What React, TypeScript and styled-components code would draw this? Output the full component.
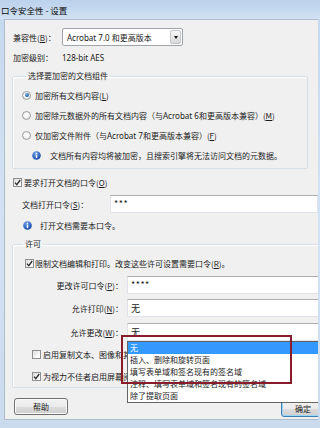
import React from 'react';
import styled, { createGlobalStyle } from 'styled-components';

const GlobalStyle = createGlobalStyle`
  html, body {
    margin: 0;
    padding: 0;
    background: #f0f0f0;
  }
  body {
    font-family: "Noto Sans", "Noto Sans CJK SC", sans-serif;
  }
`;

const Window = styled.div`
  width: 320px;
  height: 428px;
  overflow: hidden;
  display: flex;
  flex-direction: column;
  background: linear-gradient(180deg, #c4d8ef 0%, #d3e2f3 50%, #cbdbee 100%);
  font-size: 8px;
  color: #1b1b1b;
`;

const TitleBar = styled.div`
  height: 19px;
  flex: none;
  display: flex;
  align-items: center;
  padding-left: 1px;
  font-family: "Noto Sans CJK SC", sans-serif;
  font-size: 8.5px;
  color: #0d0d0d;
  background: linear-gradient(180deg, #bcd2ec 0%, #c6daf0 60%, #d2e2f4 100%);
`;

const Frame = styled.div`
  flex: 1;
  min-height: 0;
  display: flex;
  flex-direction: column;
  padding: 0 2px 8px 4px;
`;

const Body = styled.div`
  flex: 1;
  position: relative;
  overflow: hidden;
  background: #f0f0f0;
  border: 1px solid #aebccc;
  border-right: none;
  padding: 8px 0 0 8px;
  display: flex;
  flex-direction: column;
`;

const Row = styled.div<{ $top?: number; $indent?: number; $h?: number }>`
  display: flex;
  align-items: center;
  height: ${p => p.$h ?? 16}px;
  margin-top: ${p => p.$top ?? 0}px;
  padding-left: ${p => p.$indent ?? 0}px;
  white-space: nowrap;
  flex: none;
`;

const Label = styled.span<{ $w?: number; $right?: boolean }>`
  width: ${p => (p.$w ? `${p.$w}px` : 'auto')};
  flex: none;
  text-align: ${p => (p.$right ? 'right' : 'left')};
  padding-right: ${p => (p.$right ? 4 : 0)}px;
  box-sizing: border-box;
`;

const ClippedText = styled.span<{ $max: number }>`
  display: inline-block;
  max-width: ${p => p.$max}px;
  overflow: hidden;
  white-space: nowrap;
  font-family: "Noto Sans CJK SC", sans-serif;
`;

const ComboBox = styled.div`
  width: 121px;
  height: 18px;
  box-sizing: border-box;
  border: 1px solid #9fa4aa;
  border-radius: 2px;
  background: #fff;
  display: flex;
  align-items: center;
  padding-left: 4px;
`;

const ComboText = styled.span`
  flex: 1;
`;

const ArrowButton = styled.span`
  width: 11px;
  height: 14px;
  margin-right: 1px;
  border-radius: 2px;
  border: 1px solid #c3c6ca;
  box-sizing: border-box;
  background: linear-gradient(180deg, #f7f7f7 0%, #e6e6e6 55%, #d8d8d8 100%);
  display: flex;
  align-items: center;
  justify-content: center;
  &::after {
    content: '';
    border-left: 2.5px solid transparent;
    border-right: 2.5px solid transparent;
    border-top: 3px solid #111;
  }
`;

const TextBox = styled.div<{ $w: number }>`
  position: relative;
  width: ${p => p.$w}px;
  height: 18px;
  box-sizing: border-box;
  background: #fff;
  border: 1px solid #e2e3ea;
  border-top-color: #abadb3;
  display: flex;
  align-items: center;
  padding-left: 3px;
  font-family: "Noto Sans CJK SC", sans-serif;
  font-size: 9px;
`;

const Dots = styled.span`
  align-self: flex-start;
  margin-top: 1px;
  font-size: 9px;
  letter-spacing: 0.5px;
`;

const Fieldset = styled.fieldset<{ $w: number; $top: number; $legend: number }>`
  flex: none;
  margin: ${p => p.$top}px 0 0 -1px;
  width: ${p => p.$w}px;
  box-sizing: border-box;
  border: 1px solid #d5dfe5;
  border-radius: 2px;
  box-shadow: inset 1px 1px 0 #fff;
  padding: 2px 0 3px 9px;
  min-inline-size: 0;
  & > legend {
    margin-left: ${p => p.$legend}px;
    padding: 0 2px;
    line-height: 14px;
    height: 14px;
    font-size: 8px;
  }
`;

const RadioDot = styled.span<{ $on?: boolean }>`
  width: 9px;
  height: 9px;
  flex: none;
  box-sizing: border-box;
  border-radius: 50%;
  border: 1px solid #9a9c9e;
  background: radial-gradient(circle at 50% 40%, #ffffff 0%, #e4e4e4 100%);
  margin-right: 4px;
  display: flex;
  align-items: center;
  justify-content: center;
  &::after {
    content: '';
    display: ${p => (p.$on ? 'block' : 'none')};
    width: 4px;
    height: 4px;
    border-radius: 50%;
    background: radial-gradient(circle at 40% 35%, #7fb3e6 0%, #1f5fa8 70%, #173f78 100%);
  }
`;

const CheckBoxBox = styled.span<{ $gap?: number }>`
  width: 9px;
  height: 9px;
  flex: none;
  box-sizing: border-box;
  border: 1px solid #8e8f8f;
  background: linear-gradient(135deg, #dcdcdc 0%, #f6f6f6 60%, #ffffff 100%);
  margin-right: ${p => p.$gap ?? 2}px;
  display: flex;
  align-items: center;
  justify-content: center;
`;

const Cjk = styled.span`
  font-family: "Noto Sans CJK SC", sans-serif;
`;

const Uline = styled.span`
  text-decoration: underline;
`;

const ButtonRow = styled.div`
  flex: none;
  display: flex;
  justify-content: space-between;
  align-items: flex-start;
  margin-top: 10px;
  padding-left: 1px;
`;

const Button = styled.div<{ $w: number; $default?: boolean; $top?: number }>`
  width: ${p => p.$w}px;
  height: 17px;
  margin-top: ${p => p.$top ?? 0}px;
  box-sizing: border-box;
  border: 1px solid ${p => (p.$default ? '#3c7fb1' : '#707070')};
  border-radius: 3px;
  background: linear-gradient(180deg, #f2f2f2 0%, #ebebeb 50%, #dddddd 51%, #cfcfcf 100%);
  box-shadow: inset 0 0 0 1px ${p => (p.$default ? '#9fd5f5' : '#fbfbfb')};
  display: flex;
  align-items: center;
  justify-content: center;
  font-family: "Noto Sans CJK SC", sans-serif;
  font-size: 8px;
`;

const DropHost = styled.div`
  position: relative;
`;

const DropList = styled.div`
  position: absolute;
  top: 100%;
  left: 0;
  width: 200px;
  box-sizing: border-box;
  background: #fff;
  border: 1px solid #646464;
  z-index: 2;
  font-family: "Noto Sans", "Noto Sans CJK SC", sans-serif;
`;

const DropItem = styled.div<{ $selected?: boolean }>`
  height: 12px;
  line-height: 12px;
  padding-left: 2px;
  overflow: hidden;
  background: ${p => (p.$selected ? '#3399ff' : 'transparent')};
  color: ${p => (p.$selected ? '#fff' : '#1b1b1b')};
  white-space: nowrap;
`;

const Annotation = styled.div`
  position: absolute;
  left: -6px;
  top: 12px;
  width: 171px;
  height: 49px;
  box-sizing: border-box;
  border: 2px solid #8a1b2b;
  z-index: 3;
  pointer-events: none;
`;

function Check() {
  return (
    <svg width="7" height="7" viewBox="0 0 7 7">
      <path d="M1 3.6 L2.8 5.6 L6.2 1" fill="none" stroke="#2b2b2b" strokeWidth="1.3" />
    </svg>
  );
}

function InfoIcon({ gap }: { gap: number }) {
  return (
    <svg width="9" height="9" viewBox="0 0 9 9" style={{ marginRight: gap, flex: 'none' }}>
      <defs>
        <radialGradient id="ig" cx="40%" cy="30%" r="70%">
          <stop offset="0%" stopColor="#6fa6ec" />
          <stop offset="100%" stopColor="#1646a8" />
        </radialGradient>
      </defs>
      <circle cx="4.5" cy="4.5" r="4.3" fill="url(#ig)" />
      <circle cx="4.5" cy="2.4" r="0.8" fill="#fff" />
      <rect x="3.8" y="3.7" width="1.4" height="3.4" fill="#fff" />
    </svg>
  );
}

function CheckBox({ checked, gap }: { checked?: boolean; gap?: number }) {
  return <CheckBoxBox $gap={gap}>{checked && <Check />}</CheckBoxBox>;
}

export default function App() {
  return (
    <Window>
      <GlobalStyle />
      <TitleBar>口令安全性 - 设置</TitleBar>
      <Frame>
        <Body>
          <Row $h={18}>
            <Label $w={49}><Cjk>兼容性(<Uline>B</Uline>)：</Cjk></Label>
            <ComboBox>
              <ComboText>Acrobat 7.0 <Cjk>和更高版本</Cjk></ComboText>
              <ArrowButton />
            </ComboBox>
          </Row>
          <Row $top={3}>
            <Label $w={49}><Cjk>加密级别：</Cjk></Label>
            <span>128-bit AES</span>
          </Row>

          <Fieldset $w={296} $top={4} $legend={4}>
            <legend><Cjk>选择要加密的文档组件</Cjk></legend>
            <Row $h={20}>
              <RadioDot $on />
              <Cjk>加密所有文档内容(<Uline>L</Uline>)</Cjk>
            </Row>
            <Row $h={20}>
              <RadioDot />
              <Cjk>加密除元数据外的所有文档内容（与 </Cjk>Acrobat 6<Cjk> 和更高版本兼容）(<Uline>M</Uline>)</Cjk>
            </Row>
            <Row $h={20}>
              <RadioDot />
              <Cjk>仅加密文件附件（与 </Cjk>Acrobat 7<Cjk> 和更高版本兼容）(<Uline>F</Uline>)</Cjk>
            </Row>
            <Row $h={20} $indent={10}>
              <InfoIcon gap={9} />
              <Cjk>文档所有内容均将被加密，且搜索引擎将无法访问文档的元数据。</Cjk>
            </Row>
          </Fieldset>

          <Row $top={5}>
            <CheckBox checked />
            <Cjk>要求打开文档的口令(<Uline>O</Uline>)</Cjk>
          </Row>
          <Row $top={5} $h={18} $indent={9}>
            <Label $w={88}><Cjk>文档打开口令(<Uline>S</Uline>)：</Cjk></Label>
            <TextBox $w={215}><Dots>***</Dots></TextBox>
          </Row>
          <Row $top={4} $indent={10}>
            <InfoIcon gap={8} />
            <Cjk>打开文档需要本口令。</Cjk>
          </Row>

          <Fieldset $w={312} $top={4} $legend={1}>
            <legend><Cjk>许可</Cjk></legend>
            <Row $top={2} $indent={3}>
              <CheckBox checked gap={1} />
              <Cjk>限制文档编辑和打印。改变这些许可设置需要口令(<Uline>R</Uline>)。</Cjk>
            </Row>
            <Row $top={5} $h={18}>
              <Label $w={105} $right><Cjk>更改许可口令(<Uline>P</Uline>)：</Cjk></Label>
              <TextBox $w={200}><Dots>****</Dots></TextBox>
            </Row>
            <Row $top={5} $h={18}>
              <Label $w={105} $right><Cjk>允许打印(<Uline>N</Uline>)：</Cjk></Label>
              <TextBox $w={200}>无</TextBox>
            </Row>
            <Row $top={6} $h={18}>
              <Label $w={105} $right><Cjk>允许更改(<Uline>W</Uline>)：</Cjk></Label>
              <DropHost>
                <TextBox $w={200}>无</TextBox>
                <DropList>
                  <DropItem $selected>无</DropItem>
                  <DropItem>插入、删除和旋转页面</DropItem>
                  <DropItem>填写表单域和签名现有的签名域</DropItem>
                  <DropItem>注释、填写表单域和签名现有的签名域</DropItem>
                  <DropItem>除了提取页面</DropItem>
                </DropList>
                <Annotation />
              </DropHost>
            </Row>
            <Row $top={5} $indent={10}>
              <CheckBox gap={2} />
              <ClippedText $max={85}>启用复制文本、图像和其它内容(E)</ClippedText>
            </Row>
            <Row $top={6} $indent={10}>
              <CheckBox checked gap={2} />
              <ClippedText $max={85}>为视力不佳者启用屏幕阅读器设备的文本辅助功能(V)</ClippedText>
            </Row>
          </Fieldset>

          <ButtonRow>
            <Button $w={54}>帮助</Button>
            <Button $w={44} $default $top={2} style={{ marginRight: -7 }}>确定</Button>
          </ButtonRow>
        </Body>
      </Frame>
    </Window>
  );
}
